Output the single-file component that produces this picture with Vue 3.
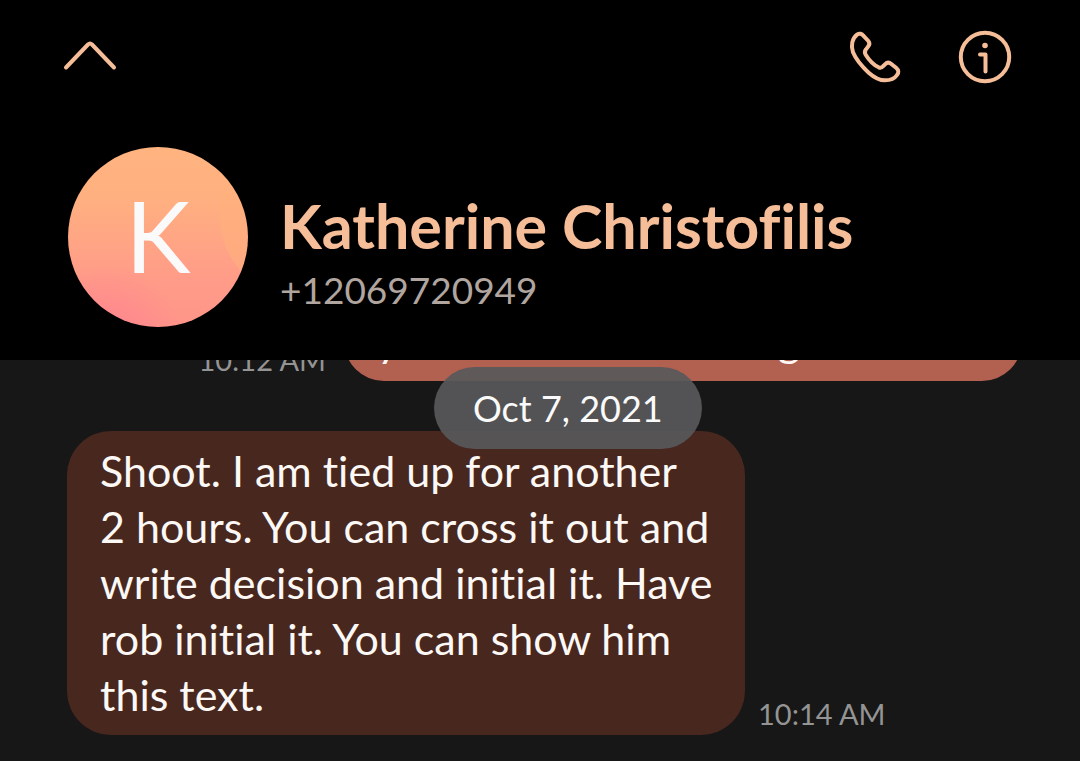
<script setup>
const contact = { initial: 'K', name: 'Katherine Christofilis', phone: '+12069720949' }
const incoming = {
  lines: [
    'Shoot. I am tied up for another',
    '2 hours. You can cross it out and',
    'write decision and initial it. Have',
    'rob initial it. You can show him',
    'this text.',
  ],
  time: '10:14 AM',
}
</script>

<template>
  <div class="screen">
    <header class="header">
      <nav class="toolbar">
        <button class="icon-button" type="button" aria-label="Collapse">
          <svg width="54" height="54" viewBox="0 0 54 54" class="stroke">
            <path d="M3 37.5 L25 14.5 Q27 12.5 29 14.5 L51 37.5" />
          </svg>
        </button>
        <div class="actions">
          <button class="icon-button" type="button" aria-label="Call">
            <svg width="54" height="54" viewBox="54 45 162 162" class="stroke thick">
              <path d="M82 58 C88 54 96 56 100 62 L115 78 C120 84 119 89 114 95 L108 103 C103 109 104 114 107 119 C117 135 132 150 146 157 C151 159 156 158 160 153 L165 148 C171 142 178 142 184 147 L199 159 C206 165 207 173 201 180 C193 192 180 196 165 196 C148 196 132 187 116 173 C94 153 77 131 69 112 C62 92 66 70 82 58Z" />
            </svg>
          </button>
          <button class="icon-button" type="button" aria-label="Contact details">
            <svg width="54" height="54" viewBox="0 0 54 54" class="stroke">
              <circle cx="27" cy="27" r="24.2" />
              <path d="M22 24.5 H27.5 V41.5" />
              <circle class="dot" cx="27" cy="15.5" r="2.8" />
            </svg>
          </button>
        </div>
      </nav>
      <div class="contact">
        <div class="avatar">{{ contact.initial }}</div>
        <div class="identity">
          <h1 class="name">{{ contact.name }}</h1>
          <p class="phone">{{ contact.phone }}</p>
        </div>
      </div>
    </header>

    <main class="thread">
      <div class="date">Oct 7, 2021</div>
      <div class="row sent">
        <time class="time">10:12 AM</time>
        <div class="bubble"><span>y</span><span>g</span></div>
      </div>
      <div class="row received">
        <div class="bubble">
          <div v-for="line in incoming.lines" :key="line">{{ line }}</div>
        </div>
        <time class="time">{{ incoming.time }}</time>
      </div>
    </main>
  </div>
</template>

<style>
body {
  margin: 0;
  background: #000;
}
</style>

<style scoped>
.screen {
  height: 100vh;
  display: flex;
  flex-direction: column;
  overflow: hidden;
  background: #000;
  font-family: Lato, "Liberation Sans", sans-serif;
  font-variant-ligatures: none;
}
.header {
  flex: none;
  padding: 30px 68px 33px;
}
.toolbar,
.actions {
  display: flex;
  justify-content: space-between;
}
.toolbar {
  margin: 0 0 63px -5px;
}
.actions {
  gap: 56px;
}
.icon-button {
  width: 54px;
  height: 54px;
  padding: 0;
  border: 0;
  background: none;
  color: #f5bd98;
}
.icon-button svg {
  display: block;
}
.stroke {
  fill: none;
  stroke: currentColor;
  stroke-width: 4;
  stroke-linecap: round;
  stroke-linejoin: round;
}
.thick {
  stroke-width: 12;
}
.dot {
  fill: currentColor;
  stroke: none;
}
.contact {
  display: flex;
  align-items: center;
  gap: 32px;
}
.avatar {
  box-sizing: border-box;
  width: 180px;
  height: 180px;
  padding-bottom: 4px;
  display: flex;
  align-items: center;
  justify-content: center;
  border-radius: 50%;
  background:
    radial-gradient(circle at 130% 38%, rgba(255, 176, 124, 0.6) 0 82px, transparent 83px),
    radial-gradient(circle at 20% 110%, #ff8290 0, rgba(255, 130, 144, 0) 80px),
    linear-gradient(180deg, #ffb480 0%, #ffb080 28%, #ff9c88 72%, #ff9589 100%);
  color: #fafafa;
  font-size: 98px;
  line-height: 112px;
}
.identity {
  padding-top: 34px;
}
.name,
.phone {
  margin: 0;
}
.name {
  color: #f5bd98;
  font-size: 61px;
  line-height: 72px;
  font-weight: 700;
}
.phone {
  color: #b0a59f;
  font-size: 37px;
  line-height: 56px;
}
.thread {
  position: relative;
  flex: 1;
  min-height: 0;
  display: flex;
  flex-direction: column;
  justify-content: flex-end;
  gap: 50px;
  padding: 0 58px 26px 67px;
  overflow: hidden;
  background: #171717;
}
.row {
  flex: none;
  display: flex;
  align-items: flex-end;
  gap: 13px;
}
.sent {
  justify-content: flex-end;
  gap: 18px;
}
.bubble {
  box-sizing: border-box;
  width: 678px;
  padding: 12px 33px;
  border-radius: 44px;
  background: #48271f;
  color: #fcf8f5;
  font-size: 43px;
  line-height: 56px;
  white-space: nowrap;
}
.sent .bubble {
  display: flex;
  justify-content: space-between;
  padding-right: 222px;
  background: #b26050;
}
.time {
  color: #949494;
  font-size: 29px;
  line-height: 42px;
}
.date {
  position: absolute;
  top: 7px;
  left: 50%;
  margin-left: -106px;
  padding: 13px 39px;
  border-radius: 41px;
  background: rgba(88, 88, 90, 0.93);
  color: #fafafa;
  font-size: 36px;
  line-height: 56px;
  white-space: nowrap;
}
</style>
